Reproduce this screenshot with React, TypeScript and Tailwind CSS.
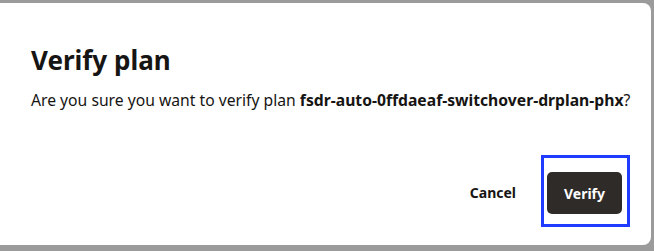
export default function App() {
  return (
    <div
      className="h-[251px] w-[654px] overflow-hidden bg-[#9b9b9b] pt-[3px]"
      style={{ fontFamily: '"Noto Sans", "Open Sans", sans-serif' }}
    >
      <div className="flex h-[242px] w-[651px] flex-col rounded-r-[8px] bg-white text-[#161513]">
        <h1 className="pl-[31px] pt-[37px] text-[26px] font-bold leading-[40px]">Verify plan</h1>
        <p className="pl-[31px] pt-[10px] text-[15.7px] leading-[20px]">
          Are you sure you want to verify plan{" "}
          <span className="font-bold">fsdr-auto-0ffdaeaf-switchover-drplan-phx</span>?
        </p>
        <div className="mt-auto flex items-center justify-end pb-[18px] pr-[21px]">
          <button className="mr-[25px] mt-[3px] text-[14px] font-bold">Cancel</button>
          <div className="border-[3px] border-[#1f3bff] pb-[10px] pl-[3px] pr-[5px] pt-[14px]">
            <button className="h-[42px] w-[75px] rounded-[5px] bg-[#2f2b28] text-[14px] font-bold text-white">
              Verify
            </button>
          </div>
        </div>
      </div>
    </div>
  );
}
